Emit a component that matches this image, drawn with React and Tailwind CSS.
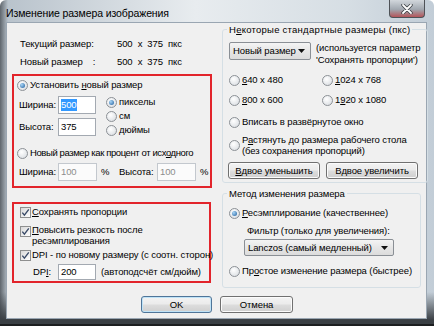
import React from 'react';

const Radio = ({ checked }) => (
  <span className="inline-flex h-[11px] w-[11px] shrink-0 items-center justify-center rounded-full border border-[#8c9196] bg-[radial-gradient(circle_at_40%_35%,#ffffff,#d5d9de)]">
    {checked && <span className="h-[5px] w-[5px] rounded-full bg-[radial-gradient(circle_at_35%_35%,#a9d6f7,#1d5c9c)]" />}
  </span>
);

const Check = ({ className = '' }) => (
  <span className={`inline-flex h-[11px] w-[11px] shrink-0 items-center justify-center border border-[#8e8f8f] bg-[linear-gradient(135deg,#d8d8d8,#ffffff)] ${className}`}>
    <svg width="9" height="9" viewBox="0 0 9 9">
      <path d="M1.3 4.6 L3.4 7.2 L7.8 1.4" fill="none" stroke="#3a4b68" strokeWidth="1.4" />
    </svg>
  </span>
);

const Input = ({ value, w = 'w-[38px]', h = 'h-[18px]', disabled, selected }) => (
  <span className={`inline-flex ${w} ${h} shrink-0 items-center border px-[2px] ${disabled ? 'border-[#c3c8ce] bg-[#fbfbfb] text-[#8d8d8d]' : 'border-[#a3a9b1] bg-white'}`}>
    {selected ? <span className="bg-[#3399ff] text-white">{value}</span> : value}
  </span>
);

const Button = ({ children, className = '', primary }) => (
  <div className={`flex h-[17px] items-center justify-center rounded-[3px] border ${primary ? 'border-[#4f7599] shadow-[inset_0_0_0_1px_#bfe3f7]' : 'border-[#707070] shadow-[inset_0_0_0_1px_#fbfbfb]'} bg-[linear-gradient(#f3f3f3_0%,#ebebeb_48%,#dddddd_52%,#cfcfcf_100%)] ${className}`}>
    {children}
  </div>
);

const Combo = ({ children, className = '' }) => (
  <div className={`flex items-center justify-between rounded-[2px] border border-[#8a8f95] bg-[linear-gradient(#f4f4f4,#e6e6e6_50%,#dcdcdc)] pl-[3px] pr-[5px] ${className}`}>
    <span>{children}</span>
    <svg width="7" height="4" viewBox="0 0 7 4"><path d="M0 0 H7 L3.5 4 Z" fill="#111" /></svg>
  </div>
);

const RadioRow = ({ checked, children, className = '' }) => (
  <div className={`flex items-center gap-[2px] ${className}`}>
    <Radio checked={checked} />
    <span>{children}</span>
  </div>
);

export default function App() {
  return (
    <div className="h-[326px] w-[434px] overflow-hidden whitespace-nowrap rounded-t-[6px] border-b-[2px] border-[#1c1e20] bg-[linear-gradient(180deg,transparent_292px,#3a3f44_320px),linear-gradient(90deg,#5f666d,#b9c3cc_8px,#e8ecef_45%,#d6dee4_80%,#c2cdd7)] font-['Liberation_Sans',Arial,sans-serif] text-[9.5px] leading-[12px] tracking-[-0.1px] text-black">
      {/* title bar */}
      <div className="flex h-[22px] items-start justify-between">
        <span className="pl-[6px] pt-[6px] text-[10.5px] leading-[14px] tracking-[-0.1px]">Изменение размера изображения</span>
        <div className="mr-[9px] flex h-[18px] w-[36px] items-center justify-center rounded-b-[4px] border border-t-0 border-[#4e5257] bg-[linear-gradient(#d2d7dc,#a1a8b0_55%,#b4555a)]">
          <svg width="12" height="10" viewBox="0 0 12 10">
            <path d="M2 1 L10 9 M10 1 L2 9" stroke="#3b3f44" strokeWidth="3.4" strokeLinecap="round" />
            <path d="M2 1 L10 9 M10 1 L2 9" stroke="#ffffff" strokeWidth="1.8" strokeLinecap="round" />
          </svg>
        </div>
      </div>

      {/* client area */}
      <div className="ml-[6px] flex h-[297px] w-[421px] border border-[#9aa6b2] bg-[#f0f0f0]">
        {/* left column */}
        <div className="ml-[5px] w-[200px] shrink-0">
          <div className="pl-[8px] pt-[12px]">
            <div className="flex h-[18px] items-center">
              <span className="w-[97px]">Текущий размер:</span>
              <span className="whitespace-pre">500  x  375  пкс</span>
            </div>
            <div className="flex h-[18px] items-center">
              <span className="w-[97px] whitespace-pre">Новый размер    :</span>
              <span className="whitespace-pre">500  x  375  пкс</span>
            </div>
          </div>

          <div className="mt-[3px] h-[114px] border-2 border-[#e2242b]">
            <RadioRow checked className="h-[18px] pl-[3px]">
              Установить <u>н</u>овый размер
            </RadioRow>
            <div className="flex">
              <div className="w-[92px]">
                <div className="flex h-[22px] items-center pl-[5px]">
                  <span className="w-[39px]">Ширина:</span>
                  <Input value="500" selected />
                </div>
                <div className="flex h-[22px] items-center pl-[5px]">
                  <span className="w-[39px]">Высота:</span>
                  <Input value="375" />
                </div>
              </div>
              <div className="pt-[1px]">
                <RadioRow checked className="h-[14px]">пикселы</RadioRow>
                <RadioRow className="h-[14px]">см</RadioRow>
                <RadioRow className="h-[14px]">дюймы</RadioRow>
              </div>
            </div>
            <RadioRow className="mt-[6px] h-[18px] pl-[3px] tracking-[-0.4px]">
              Новый размер как процент от исх<u>о</u>дного
            </RadioRow>
            <div className="flex h-[20px] items-center pl-[5px]">
              <span className="w-[39px]">Ширина:</span>
              <Input value="100" w="w-[39px]" disabled />
              <span className="w-[22px] pl-[4px]">%</span>
              <span className="w-[38px]">Высота:</span>
              <Input value="100" w="w-[39px]" disabled />
              <span className="pl-[4px]">%</span>
            </div>
          </div>

          <div className="mt-[14px] h-[81px] w-[199px] border-2 border-[#e2242b]">
            <div className="flex h-[16px] items-center gap-[1px] pl-[6px]">
              <Check />
              <span><u>С</u>охранять пропорции</span>
            </div>
            <div className="mt-[4px] flex items-start gap-[1px] pl-[6px]">
              <Check className="mt-[2px]" />
              <span className="leading-[11px]"><u>П</u>овысить резкость после<br />ресэмплирования</span>
            </div>
            <div className="mt-[1px] flex h-[16px] items-center gap-[1px] pl-[6px]">
              <Check />
              <span>DPI - по новому размеру (с соотн. сторон)</span>
            </div>
            <div className="flex h-[18px] items-center">
              <span className="w-[44px] pl-[19px]">DP<u>I</u>:</span>
              <Input value="200" h="h-[16px]" />
              <span className="ml-[5px]">(автоподсчёт см/дюйм)</span>
            </div>
          </div>

          <Button primary className="ml-[129px] mt-[13px] w-[71px]">OK</Button>
        </div>

        {/* right column */}
        <div className="ml-[10px] w-[199px] shrink-0">
          <fieldset className="h-[160px] rounded-[3px] border border-[#d5dfe5] px-[6px]">
            <legend className="ml-[-2px] px-[2px] leading-[13px] tracking-[0.25px]">Н<u>е</u>которые стандартные размеры (пкс)</legend>
            <div className="mt-[6px] flex">
              <Combo className="h-[18px] w-[82px] shrink-0">Новый размер</Combo>
              <span className="ml-[5px] leading-[12px]">(используется параметр<br />'Сохранять пропорции')</span>
            </div>
            <div className="mt-[7px] grid grid-cols-[93px_1fr] gap-y-[6px]">
              <RadioRow className="h-[14px]"><u>6</u>40 x 480</RadioRow>
              <RadioRow className="h-[14px]"><u>1</u>024 x 768</RadioRow>
              <RadioRow className="h-[14px]"><u>8</u>00 x 600</RadioRow>
              <RadioRow className="h-[14px]">1<u>9</u>20 x 1080</RadioRow>
            </div>
            <RadioRow className="mt-[8px] h-[14px]">Вписать в развёрнутое окно</RadioRow>
            <RadioRow className="mt-[5px]">
              <span className="block leading-[11px]">Р<u>а</u>стянуть до размера рабочего стола<br />(без сохранения пропорций)</span>
            </RadioRow>
            <div className="-ml-[1px] mt-[6px] flex gap-[6px]">
              <Button className="w-[92px]"><span><u>В</u>двое уменьшить</span></Button>
              <Button className="w-[92px]"><span>В<u>д</u>вое увеличить</span></Button>
            </div>
          </fieldset>

          <fieldset className="mt-[4px] h-[101px] rounded-[3px] border border-[#d5dfe5] px-[6px]">
            <legend className="ml-[-2px] px-[2px] leading-[13px]">Метод изменения размера</legend>
            <RadioRow checked className="mt-[6px] h-[14px]"><u>Р</u>есэмплирование (качественнее)</RadioRow>
            <div className="mt-[4px] flex h-[14px] items-center pl-[18px]">Фильтр (только для увеличения):</div>
            <Combo className="ml-[15px] mt-[1px] h-[17px] w-[150px]">Lanczos (самый медленный)</Combo>
            <RadioRow className="mt-[8px] h-[14px]">Пр<u>о</u>стое изменение размера (быстрее)</RadioRow>
          </fieldset>

          <Button className="-ml-[2px] mt-[8px] w-[73px]">Отмена</Button>
        </div>
      </div>
    </div>
  );
}
